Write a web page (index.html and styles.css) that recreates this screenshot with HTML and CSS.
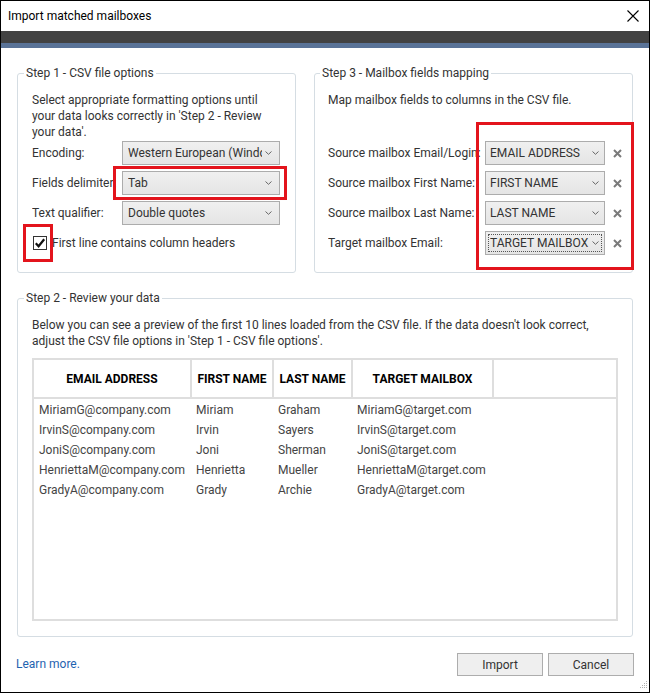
FILE: index.html
```html
<html>
  <head>
    <link rel="stylesheet" href="styles.css">
  </head>
  <body>
    <div class="window">
      <div class="titlebar">
        <span class="title">Import matched mailboxes</span>
        <svg class="close" width="12" height="12" viewBox="0 0 12 12"><path d="M0.5 0.5 L11.5 11.5 M11.5 0.5 L0.5 11.5" stroke="#000" stroke-width="1.1" fill="none"/></svg>
      </div>
      <div class="band_dark"></div>
      <div class="band_blue"></div>

      <div class="content">
        <div class="top_row">
          <fieldset class="group group_csv">
            <legend>Step 1 - CSV file options</legend>
            <p class="hint">Select appropriate formatting options until<br>your data looks correctly in 'Step 2 - Review<br>your data'.</p>
            <div class="form_row">
              <label>Encoding:</label>
              <div class="combo"><span class="combo_text">Western European (Windows)</span><svg class="arrow" width="7" height="4" viewBox="0 0 7 4"><path d="M0.5 0.5 L3.5 3.3 L6.5 0.5" stroke="#666" fill="none"/></svg></div>
            </div>
            <div class="form_row">
              <label>Fields delimiter:</label>
              <div class="combo"><span class="combo_text">Tab</span><svg class="arrow" width="7" height="4" viewBox="0 0 7 4"><path d="M0.5 0.5 L3.5 3.3 L6.5 0.5" stroke="#666" fill="none"/></svg></div>
            </div>
            <div class="form_row">
              <label>Text qualifier:</label>
              <div class="combo"><span class="combo_text">Double quotes</span><svg class="arrow" width="7" height="4" viewBox="0 0 7 4"><path d="M0.5 0.5 L3.5 3.3 L6.5 0.5" stroke="#666" fill="none"/></svg></div>
            </div>
            <div class="check_row">
              <span class="checkbox"><svg width="12" height="12" viewBox="0 0 12 12"><path d="M1.8 6.2 L4.6 9.2 L10.2 2.2" stroke="#111" stroke-width="2.2" fill="none"/></svg></span>
              <span>First line contains column headers</span>
            </div>
          </fieldset>

          <fieldset class="group group_map">
            <legend>Step 3 - Mailbox fields mapping</legend>
            <p class="hint">Map mailbox fields to columns in the CSV file.</p>
            <div class="map_rows">
              <div class="form_row">
                <label>Source mailbox Email/Login:</label>
                <div class="combo"><span class="combo_text">EMAIL ADDRESS</span><svg class="arrow" width="7" height="4" viewBox="0 0 7 4"><path d="M0.5 0.5 L3.5 3.3 L6.5 0.5" stroke="#666" fill="none"/></svg></div>
                <svg class="clear" width="9" height="9" viewBox="0 0 9 9"><path d="M1 1 L8 8 M8 1 L1 8" stroke="#7a7a7a" stroke-width="2" fill="none"/></svg>
              </div>
              <div class="form_row">
                <label>Source mailbox First Name:</label>
                <div class="combo"><span class="combo_text">FIRST NAME</span><svg class="arrow" width="7" height="4" viewBox="0 0 7 4"><path d="M0.5 0.5 L3.5 3.3 L6.5 0.5" stroke="#666" fill="none"/></svg></div>
                <svg class="clear" width="9" height="9" viewBox="0 0 9 9"><path d="M1 1 L8 8 M8 1 L1 8" stroke="#7a7a7a" stroke-width="2" fill="none"/></svg>
              </div>
              <div class="form_row">
                <label>Source mailbox Last Name:</label>
                <div class="combo"><span class="combo_text">LAST NAME</span><svg class="arrow" width="7" height="4" viewBox="0 0 7 4"><path d="M0.5 0.5 L3.5 3.3 L6.5 0.5" stroke="#666" fill="none"/></svg></div>
                <svg class="clear" width="9" height="9" viewBox="0 0 9 9"><path d="M1 1 L8 8 M8 1 L1 8" stroke="#7a7a7a" stroke-width="2" fill="none"/></svg>
              </div>
              <div class="form_row">
                <label>Target mailbox Email:</label>
                <div class="combo combo_focus"><span class="combo_text">TARGET MAILBOX</span><svg class="arrow" width="7" height="4" viewBox="0 0 7 4"><path d="M0.5 0.5 L3.5 3.3 L6.5 0.5" stroke="#666" fill="none"/></svg></div>
                <svg class="clear" width="9" height="9" viewBox="0 0 9 9"><path d="M1 1 L8 8 M8 1 L1 8" stroke="#7a7a7a" stroke-width="2" fill="none"/></svg>
              </div>
            </div>
          </fieldset>
        </div>

        <fieldset class="group group_review">
          <legend>Step 2 - Review your data</legend>
          <p class="hint">Below you can see a preview of the first 10 lines loaded from the CSV file. If the data doesn't look correct,<br>adjust the CSV file options in 'Step 1 - CSV file options'.</p>
          <div class="grid">
            <table>
              <tr class="head">
                <th class="col_email">EMAIL ADDRESS</th>
                <th class="col_first">FIRST NAME</th>
                <th class="col_last">LAST NAME</th>
                <th class="col_target">TARGET MAILBOX</th>
                <th class="col_fill"></th>
              </tr>
              <tr class="first"><td>MiriamG@company.com</td><td>Miriam</td><td>Graham</td><td>MiriamG@target.com</td><td></td></tr>
              <tr><td>IrvinS@company.com</td><td>Irvin</td><td>Sayers</td><td>IrvinS@target.com</td><td></td></tr>
              <tr><td>JoniS@company.com</td><td>Joni</td><td>Sherman</td><td>JoniS@target.com</td><td></td></tr>
              <tr><td>HenriettaM@company.com</td><td>Henrietta</td><td>Mueller</td><td>HenriettaM@target.com</td><td></td></tr>
              <tr><td>GradyA@company.com</td><td>Grady</td><td>Archie</td><td>GradyA@target.com</td><td></td></tr>
            </table>
          </div>
        </fieldset>
      </div>

      <div class="footer">
        <a class="learn" href="#">Learn more.</a>
        <div class="buttons">
          <button>Import</button>
          <button>Cancel</button>
        </div>
      </div>

      <svg class="grip" width="10" height="10" viewBox="0 0 10 10">
        <g fill="#b0b0b0"><rect x="8" y="0" width="1" height="1"/><rect x="6" y="2" width="1" height="1"/><rect x="8" y="2" width="1" height="1"/><rect x="4" y="4" width="1" height="1"/><rect x="6" y="4" width="1" height="1"/><rect x="8" y="4" width="1" height="1"/><rect x="2" y="6" width="1" height="1"/><rect x="4" y="6" width="1" height="1"/><rect x="6" y="6" width="1" height="1"/><rect x="8" y="6" width="1" height="1"/></g>
      </svg>

      <!-- red highlight marks drawn over the dialog -->
      <div class="mark mark_tab"></div>
      <div class="mark mark_check"></div>
      <div class="mark mark_map"></div>
    </div>
  </body>
</html>
```

FILE: styles.css
```css
body { margin: 0; background: #fff; font-family: Roboto, "Open Sans", sans-serif; font-size: 12px; color: #333; }

.window { position: relative; width: 648px; height: 691px; border: 1px solid #000; background: #fff; display: flex; flex-direction: column; }

.titlebar { height: 30px; display: flex; align-items: center; justify-content: space-between; padding: 0 10px 0 7px; }
.title { color: #000; }
.close { display: block; }
.band_dark { height: 12px; background: #424242; }
.band_blue { height: 5px; background: #5a7397; }

.content { padding: 17px 16px 0 16px; }
.top_row { display: flex; gap: 18px; height: 208px; }

.group { margin: 0; padding: 0 14px 0 14px; border: 1px solid #d5dde3; border-radius: 3px; min-width: 0; }
.group legend { margin-left: -8px; padding: 0 2px; line-height: 16px; color: #333; }
.group_csv { width: 249px; }
.group_map { flex: 1; padding: 0 4px 0 13px; }
.group_review { height: 347px; margin-top: 17px; box-sizing: border-box; padding-bottom: 14px; }

.hint { margin: 11px 0 0 0; line-height: 16px; }

.form_row { display: flex; align-items: center; height: 24px; margin-top: 6px; }
.group_csv .hint + .form_row { margin-top: 1px; }
.form_row label { width: 90px; flex: none; white-space: nowrap; overflow: hidden; }
.group_map .form_row label { width: 157px; }

.combo { flex: none; width: 158px; height: 24px; box-sizing: border-box; border: 1px solid #acacac; background: linear-gradient(#f0f0f0, #e5e5e5); display: flex; align-items: center; padding: 0 7px 0 5px; position: relative; }
.group_map .combo { width: 120px; padding: 0 5px 0 4px; }
.combo_text { flex: 1; overflow: hidden; white-space: nowrap; color: #333; }
.combo .arrow { flex: none; margin-left: 3px; }
.combo_focus::after { content: ""; position: absolute; left: 2px; top: 2px; right: 2px; bottom: 2px; border: 1px dotted #555; }
.clear { flex: none; margin-left: 8px; }

.map_rows { padding-top: 27px; }

.check_row { display: flex; align-items: center; margin-top: 11px; height: 14px; }
.checkbox { width: 14px; height: 14px; box-sizing: border-box; border: 1px solid #333; background: #fff; display: flex; align-items: center; justify-content: center; margin: 0 5px 0 1px; }
.checkbox svg { display: block; }

.grid { margin-top: 9px; height: 263px; box-sizing: border-box; border: 2px solid #dedede; }
.grid table { border-collapse: collapse; width: 100%; table-layout: fixed; font-size: 12px; }
.head th { height: 38px; border-bottom: 2px solid #dedede; border-right: 2px solid #dedede; color: #000; font-weight: bold; text-align: center; padding: 0; white-space: nowrap; }
.head th.col_fill { border-right: none; }
.col_email { width: 156px; }
.col_first { width: 80px; }
.col_last { width: 77px; }
.col_target { width: 139px; }
.grid td { line-height: 20px; padding: 0 0 0 5px; white-space: nowrap; color: #444; }
.first td { padding-top: 1px; }

.footer { flex: 1; display: flex; justify-content: space-between; align-items: flex-start; padding: 16px 15px 0 15px; }
.learn { color: #1f63b0; text-decoration: none; line-height: 23px; }
.buttons { display: flex; gap: 5px; }
.buttons button { width: 86px; height: 23px; border: 1px solid #adadad; background: #efefef; font-family: Roboto, "Open Sans", sans-serif; font-size: 12px; color: #333; padding: 0; }

.grip { position: absolute; right: 1px; bottom: 1px; }

.mark { position: absolute; border: 3px solid #e3141c; }
.mark_tab { left: 112px; top: 165px; width: 168px; height: 28px; }
.mark_check { left: 22px; top: 223px; width: 24px; height: 32px; }
.mark_map { left: 475px; top: 121px; width: 152px; height: 142px; }
```
